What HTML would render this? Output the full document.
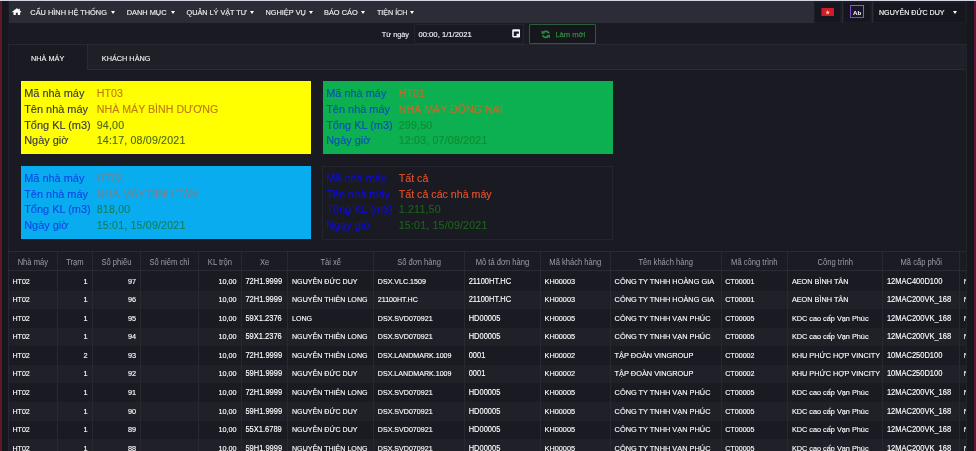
<!DOCTYPE html>
<html lang="vi">
<head>
<meta charset="utf-8">
<title>Nhà máy</title>
<style>
*{box-sizing:border-box;margin:0;padding:0}
html,body{width:976px;height:451px;overflow:hidden;background:#191a22;font-family:"Liberation Sans",sans-serif;color:#fff}
body{position:relative}
#wrap{position:absolute;left:0;top:0;width:976px;height:451px;will-change:transform;overflow:hidden}
.abs{position:absolute}
#topline{left:0;top:0;width:976px;height:1px;background:#d4d4e4}
#ledge{left:0;top:1px;width:1.5px;height:450px;background:#5e1a24}
#lgut{left:1.5px;top:1px;width:6.7px;height:450px;background:#15161e}
#redge{left:973.5px;top:1px;width:2.5px;height:450px;background:#621432}
#rgut{left:966.5px;top:1px;width:7px;height:450px;background:#15161e}
#nav{left:8.6px;top:1px;width:958px;height:22.3px;background:#2b2c36}
.nt{position:absolute;top:1.6px;-webkit-text-stroke:0.13px #f0f0f4;height:22px;line-height:22px;font-size:7.4px;color:#f0f0f4;white-space:nowrap}
.car{position:absolute;width:0;height:0;border-left:2.6px solid transparent;border-right:2.6px solid transparent;border-top:3.1px solid #fff;top:10.6px;margin-left:-0.2px}
.nbox{position:absolute;top:1px;height:22.3px;background:#1c1d26}
.nbox i{position:absolute;left:1.4px;right:1.4px;top:1.6px;bottom:1.6px;background:#16171e}
#panel{left:8px;top:44px;width:958.6px;height:407px;border-left:1px solid #22232c;border-right:1px solid #22232c}
#tabstrip{left:8px;top:44px;width:958.4px;height:26px;background:#1e1f27;border-top:1px solid #262832;border-bottom:1px solid #282a34}
#tabact{left:8px;top:44px;width:79.5px;height:26px;background:#191a22;border-top:1px solid #262832;border-right:1px solid #282a34;border-left:1px solid #23242e}
.tt{position:absolute;top:45.7px;-webkit-text-stroke:0.12px #f2f2f5;height:25px;line-height:25px;font-size:7.3px;color:#f2f2f5;white-space:nowrap}
.card{position:absolute;width:290px;height:73px;font-size:10.65px;line-height:15.7px;padding:4.9px 0 0 3.4px}
.card div{white-space:nowrap;height:15.7px}
.card span,.card b{-webkit-text-stroke:0.12px currentColor}
.card b{font-weight:normal;color:#0a0aee;display:inline-block;width:72.6px;font-size:10.95px}
.card .g{letter-spacing:0.17px}
.o{color:#f0522a}.g{color:#1a661a}
.cy b{color:#35364a}.cy .o{color:#c07a12}.cy .g{color:#4a6a12}
.cb b{color:#0a48e4}.cb .o{color:#7c8088}.cb .g{color:#10805a}
.cg b{color:#0a4ebc}.cg .o{color:#c46c2a}.cg .g{color:#108a30}
.cd b{color:#0c0ce6}.cd .o{color:#ea5028}.cd .g{color:#1c641c}

#grid{overflow:hidden;background:#191a22}
.gh{position:absolute;left:0;top:0;width:100%;background:#1a1b23}
.hc{position:absolute;top:2.4px;height:18.4px;line-height:18.4px;font-size:7.6px;color:#9c9ea8;text-align:center;white-space:nowrap;overflow:hidden}
.gr{position:absolute;left:0;width:100%;height:18.6px}
.gr.alt{background:#1f2028}
.c{position:absolute;top:0.6px;height:18.52px;line-height:18.52px;color:#fff;-webkit-text-stroke:0.12px #fff;white-space:nowrap;overflow:hidden;padding:0 4.6px 0 4.2px}
.c.r{text-align:right}
.c,.hc,.nt,.tt{transform:scaleY(1.09);transform-origin:50% 50%}
.vl{position:absolute;top:0;width:1px;height:100%;background:#272831}
.hl{position:absolute;left:0;height:1px;width:100%;background:#292a33}
</style>
</head>
<body>
<div id="wrap">
<div class="abs" id="topline"></div>
<div class="abs" id="ledge"></div><div class="abs" id="lgut"></div>
<div class="abs" id="rgut"></div><div class="abs" id="redge"></div>
<div class="abs" id="nav"></div>

<svg class="abs" style="left:12px;top:7.8px" width="9.6" height="7.3" preserveAspectRatio="none" viewBox="0 0 18 16"><path fill="#fff" d="M9 0.6 L0.3 8.2 L1.6 9.6 L2.8 8.6 V15.4 H7.2 V10.6 H10.8 V15.4 H15.2 V8.6 L16.4 9.6 L17.7 8.2 L14.6 5.4 V1.6 H12.4 V3.5 Z"/></svg>
<span class="nt" style="left:30.3px">CẤU HÌNH HỆ THỐNG</span><i class="car" style="left:110.9px"></i>
<span class="nt" style="left:126.7px">DANH MỤC</span><i class="car" style="left:171.1px"></i>
<span class="nt" style="left:186.6px;font-size:7.25px">QUẢN LÝ VẬT TƯ</span><i class="car" style="left:249.8px"></i>
<span class="nt" style="left:265.4px">NGHIỆP VỤ</span><i class="car" style="left:308.8px"></i>
<span class="nt" style="left:324px">BÁO CÁO</span><i class="car" style="left:361px"></i>
<span class="nt" style="left:376.9px;font-size:7.15px">TIỆN ÍCH</span><i class="car" style="left:410.5px"></i>
<div class="nbox" style="left:813.8px;width:28px"><i></i></div>
<div class="nbox" style="left:842.8px;width:28.8px"><i></i></div>
<div class="nbox" style="left:872.6px;width:94px"><i></i></div>
<svg class="abs" style="left:820.8px;top:8px" width="13.4" height="8.4" viewBox="0 0 30 20"><rect width="30" height="20" fill="#d4182e"/><path fill="#ffe070" d="M15 4.6 L16.5 8.7 H20.8 L17.3 11.3 L18.6 15.6 L15 13 L11.4 15.6 L12.7 11.3 L9.2 8.7 H13.5 Z"/></svg>
<div class="abs" style="left:850px;top:5.2px;width:14.2px;height:12.8px;border:1.2px solid #7a4cc0;border-top:1.7px solid #8c5cd4;border-right:1.7px solid #8c5cd4;background:#18152a"></div>
<span class="abs" style="left:850px;top:5.2px;width:14.2px;text-align:center;height:12.8px;line-height:15.4px;font-size:6.2px;font-weight:bold;color:#fff">Ab</span>
<span class="nt" style="left:879px;color:#fff;font-size:7.1px">NGUYỄN ĐỨC DUY</span><i class="car" style="left:953.2px;border-top-color:#fff"></i>


<span class="abs" style="left:381.8px;top:25.1px;height:20.5px;line-height:20.5px;font-size:7.3px;color:#e8e8ee;-webkit-text-stroke:0.15px #e8e8ee;white-space:nowrap">Từ ngày</span>
<div class="abs" style="left:413.8px;top:24.3px;width:110px;height:19.8px;background:#181922;border:1px solid #23242e"></div>
<span class="abs" style="left:418.4px;top:25.1px;height:20.5px;line-height:20.5px;font-size:7.7px;color:#f0f0f4;-webkit-text-stroke:0.15px #f0f0f4;white-space:nowrap">00:00, 1/1/2021</span>
<svg class="abs" style="left:512px;top:29.3px" width="8.4" height="8.7" viewBox="0 0 17 17.6" preserveAspectRatio="none"><path fill="#f6f6fa" fill-rule="evenodd" d="M2.6 0.6 H14.4 A2.2 2.2 0 0 1 16.6 2.8 V14.8 A2.2 2.2 0 0 1 14.4 17 H2.6 A2.2 2.2 0 0 1 0.4 14.8 V2.8 A2.2 2.2 0 0 1 2.6 0.6 Z M3.6 5 V14.2 H9.2 V9.8 H14 V5 Z"/></svg>
<div class="abs" style="left:529.3px;top:23.8px;width:66.6px;height:20.6px;border:1px solid #2d5c36;background:#15171d;border-radius:1px;z-index:3"></div>
<svg class="abs" style="left:540.7px;top:29.8px;z-index:4" width="9.6" height="8.8" viewBox="0 0 20 20" preserveAspectRatio="none"><g fill="none" stroke="#2b8a3a" stroke-width="4"><path d="M16.6 8 A6.8 6.8 0 0 0 5 5.4"/><path d="M3.4 12 A6.8 6.8 0 0 0 15 14.6"/></g><path fill="#2b8a3a" d="M0.8 1 L1.2 9.2 L9 7.8 Z M19.2 19 L18.8 10.8 L11 12.2 Z"/></svg>
<span class="abs" style="left:555.4px;top:24.1px;z-index:4;height:21px;line-height:21px;font-size:7.6px;color:#2b8a3a;-webkit-text-stroke:0.25px #2b8a3a;white-space:nowrap">Làm mới</span>

<div class="abs" id="panel"></div>
<div class="abs" id="tabstrip"></div><div class="abs" id="tabact"></div>
<i class="abs" style="left:88px;top:65px;width:878px;height:1px;background:#22232c"></i><i class="abs" style="left:961.5px;top:45px;width:1px;height:25px;background:#22232c"></i>
<span class="tt" style="left:31px">NHÀ MÁY</span>
<span class="tt" style="left:101.8px">KHÁCH HÀNG</span>
<div class="card cy" style="left:20.8px;top:81.4px;background:#ffff00;"><div><b>Mã nhà máy</b><span class="o">HT03</span></div><div><b>Tên nhà máy</b><span class="o">NHÀ MÁY BÌNH DƯƠNG</span></div><div><b>Tổng KL (m3)</b><span class="g">94,00</span></div><div><b>Ngày giờ</b><span class="g">14:17, 08/09/2021</span></div></div>
<div class="card cg" style="left:322.8px;top:81.4px;background:#0cb050;"><div><b>Mã nhà máy</b><span class="o">HT01</span></div><div><b>Tên nhà máy</b><span class="o">NHÀ MÁY ĐỒNG NAI</span></div><div><b>Tổng KL (m3)</b><span class="g">299,50</span></div><div><b>Ngày giờ</b><span class="g">12:03, 07/08/2021</span></div></div>
<div class="card cb" style="left:20.8px;top:166px;background:#0aacf0;"><div><b>Mã nhà máy</b><span class="o">HT02</span></div><div><b>Tên nhà máy</b><span class="o">NHÀ MÁY BÌNH TÂN</span></div><div><b>Tổng KL (m3)</b><span class="g">818,00</span></div><div><b>Ngày giờ</b><span class="g">15:01, 15/09/2021</span></div></div>
<div class="card cd" style="left:322.3px;top:166px;height:74px;width:291px;background:#191a22;border:1px solid #23252d;padding:3.9px 0 0 2.9px"><div><b>Mã nhà máy</b><span class="o">Tất cả</span></div><div><b>Tên nhà máy</b><span class="o">Tất cả các nhà máy</span></div><div><b>Tổng KL (m3)</b><span class="g">1.211,50</span></div><div><b>Ngày giờ</b><span class="g">15:01, 15/09/2021</span></div></div>

<!--GRIDSTART-->
<div id="grid" class="abs" style="left:7.75px;top:251.4px;width:958.5px;height:199.6px">
<div class="gh" style="height:20.6px">
<span class="hc" style="left:0.5px;width:49.2px">Nhà máy</span>
<span class="hc" style="left:49.8px;width:34.8px">Trạm</span>
<span class="hc" style="left:84.5px;width:48.3px">Số phiếu</span>
<span class="hc" style="left:132.8px;width:57.9px">Số niêm chì</span>
<span class="hc" style="left:190.8px;width:42.8px">KL trộn</span>
<span class="hc" style="left:233.5px;width:46.6px">Xe</span>
<span class="hc" style="left:280.1px;width:85.8px">Tài xế</span>
<span class="hc" style="left:365.9px;width:90.9px">Số đơn hàng</span>
<span class="hc" style="left:456.8px;width:75.8px">Mô tả đơn hàng</span>
<span class="hc" style="left:532.5px;width:70.1px">Mã khách hàng</span>
<span class="hc" style="left:602.6px;width:110.6px">Tên khách hàng</span>
<span class="hc" style="left:713.2px;width:66.7px">Mã công trình</span>
<span class="hc" style="left:780.0px;width:95.0px">Công trình</span>
<span class="hc" style="left:875.0px;width:76.9px">Mã cấp phối</span>
<span class="hc" style="left:951.9px;width:80.4px;">Ngày</span>
</div>
<div class="gr" style="top:20.60px">
<span class="c l" style="left:0.50px;width:49.25px;font-size:7.1px">HT02</span>
<span class="c r" style="left:49.75px;width:34.75px;font-size:7.3px">1</span>
<span class="c r" style="left:84.50px;width:48.35px;font-size:7.3px">97</span>
<span class="c r" style="left:190.75px;width:42.75px;font-size:7.3px">10,00</span>
<span class="c l" style="left:233.50px;width:46.55px;font-size:7.5px">72H1.9999</span>
<span class="c l" style="left:280.05px;width:85.80px;font-size:7.1px">NGUYỄN ĐỨC DUY</span>
<span class="c l" style="left:365.85px;width:90.90px;font-size:7.1px">DSX.VLC.1509</span>
<span class="c l" style="left:456.75px;width:75.80px;font-size:7.5px">21100HT.HC</span>
<span class="c l" style="left:532.55px;width:70.10px;font-size:7.35px">KH00003</span>
<span class="c l" style="left:602.65px;width:110.60px;font-size:7.38px">CÔNG TY TNHH HOÀNG GIA</span>
<span class="c l" style="left:713.25px;width:66.70px;font-size:7.15px">CT00001</span>
<span class="c l" style="left:779.95px;width:95.00px;font-size:7.3px">AEON BÌNH TÂN</span>
<span class="c l" style="left:874.95px;width:76.90px;font-size:7.5px">12MAC400D100</span>
<span class="c l" style="left:951.85px;width:80.40px;font-size:7.3px">N</span>
</div>
<div class="gr alt" style="top:39.16px">
<span class="c l" style="left:0.50px;width:49.25px;font-size:7.1px">HT02</span>
<span class="c r" style="left:49.75px;width:34.75px;font-size:7.3px">1</span>
<span class="c r" style="left:84.50px;width:48.35px;font-size:7.3px">96</span>
<span class="c r" style="left:190.75px;width:42.75px;font-size:7.3px">10,00</span>
<span class="c l" style="left:233.50px;width:46.55px;font-size:7.5px">72H1.9999</span>
<span class="c l" style="left:280.05px;width:85.80px;font-size:7.1px">NGUYỄN THIÊN LONG</span>
<span class="c l" style="left:365.85px;width:90.90px;font-size:7.1px">21100HT.HC</span>
<span class="c l" style="left:456.75px;width:75.80px;font-size:7.5px">21100HT.HC</span>
<span class="c l" style="left:532.55px;width:70.10px;font-size:7.35px">KH00003</span>
<span class="c l" style="left:602.65px;width:110.60px;font-size:7.38px">CÔNG TY TNHH HOÀNG GIA</span>
<span class="c l" style="left:713.25px;width:66.70px;font-size:7.15px">CT00001</span>
<span class="c l" style="left:779.95px;width:95.00px;font-size:7.3px">AEON BÌNH TÂN</span>
<span class="c l" style="left:874.95px;width:76.90px;font-size:7.5px">12MAC200VK_168</span>
<span class="c l" style="left:951.85px;width:80.40px;font-size:7.3px">N</span>
</div>
<div class="gr" style="top:57.72px">
<span class="c l" style="left:0.50px;width:49.25px;font-size:7.1px">HT02</span>
<span class="c r" style="left:49.75px;width:34.75px;font-size:7.3px">1</span>
<span class="c r" style="left:84.50px;width:48.35px;font-size:7.3px">95</span>
<span class="c r" style="left:190.75px;width:42.75px;font-size:7.3px">10,00</span>
<span class="c l" style="left:233.50px;width:46.55px;font-size:7.5px">59X1.2376</span>
<span class="c l" style="left:280.05px;width:85.80px;font-size:7.1px">LONG</span>
<span class="c l" style="left:365.85px;width:90.90px;font-size:7.1px">DSX.SVD070921</span>
<span class="c l" style="left:456.75px;width:75.80px;font-size:7.5px">HD00005</span>
<span class="c l" style="left:532.55px;width:70.10px;font-size:7.35px">KH00005</span>
<span class="c l" style="left:602.65px;width:110.60px;font-size:7.38px">CÔNG TY TNHH VẠN PHÚC</span>
<span class="c l" style="left:713.25px;width:66.70px;font-size:7.15px">CT00005</span>
<span class="c l" style="left:779.95px;width:95.00px;font-size:7.3px">KDC cao cấp Vạn Phúc</span>
<span class="c l" style="left:874.95px;width:76.90px;font-size:7.5px">12MAC200VK_168</span>
<span class="c l" style="left:951.85px;width:80.40px;font-size:7.3px">N</span>
</div>
<div class="gr alt" style="top:76.28px">
<span class="c l" style="left:0.50px;width:49.25px;font-size:7.1px">HT02</span>
<span class="c r" style="left:49.75px;width:34.75px;font-size:7.3px">1</span>
<span class="c r" style="left:84.50px;width:48.35px;font-size:7.3px">94</span>
<span class="c r" style="left:190.75px;width:42.75px;font-size:7.3px">10,00</span>
<span class="c l" style="left:233.50px;width:46.55px;font-size:7.5px">59X1.2376</span>
<span class="c l" style="left:280.05px;width:85.80px;font-size:7.1px">NGUYỄN THIÊN LONG</span>
<span class="c l" style="left:365.85px;width:90.90px;font-size:7.1px">DSX.SVD070921</span>
<span class="c l" style="left:456.75px;width:75.80px;font-size:7.5px">HD00005</span>
<span class="c l" style="left:532.55px;width:70.10px;font-size:7.35px">KH00005</span>
<span class="c l" style="left:602.65px;width:110.60px;font-size:7.38px">CÔNG TY TNHH VẠN PHÚC</span>
<span class="c l" style="left:713.25px;width:66.70px;font-size:7.15px">CT00005</span>
<span class="c l" style="left:779.95px;width:95.00px;font-size:7.3px">KDC cao cấp Vạn Phúc</span>
<span class="c l" style="left:874.95px;width:76.90px;font-size:7.5px">12MAC200VK_168</span>
<span class="c l" style="left:951.85px;width:80.40px;font-size:7.3px">N</span>
</div>
<div class="gr" style="top:94.84px">
<span class="c l" style="left:0.50px;width:49.25px;font-size:7.1px">HT02</span>
<span class="c r" style="left:49.75px;width:34.75px;font-size:7.3px">2</span>
<span class="c r" style="left:84.50px;width:48.35px;font-size:7.3px">93</span>
<span class="c r" style="left:190.75px;width:42.75px;font-size:7.3px">10,00</span>
<span class="c l" style="left:233.50px;width:46.55px;font-size:7.5px">72H1.9999</span>
<span class="c l" style="left:280.05px;width:85.80px;font-size:7.1px">NGUYỄN THIÊN LONG</span>
<span class="c l" style="left:365.85px;width:90.90px;font-size:7.1px">DSX.LANDMARK.1009</span>
<span class="c l" style="left:456.75px;width:75.80px;font-size:7.5px">0001</span>
<span class="c l" style="left:532.55px;width:70.10px;font-size:7.35px">KH00002</span>
<span class="c l" style="left:602.65px;width:110.60px;font-size:7.38px">TẬP ĐOÀN VINGROUP</span>
<span class="c l" style="left:713.25px;width:66.70px;font-size:7.15px">CT00002</span>
<span class="c l" style="left:779.95px;width:95.00px;font-size:7.3px">KHU PHỨC HỢP VINCITY</span>
<span class="c l" style="left:874.95px;width:76.90px;font-size:7.5px">10MAC250D100</span>
<span class="c l" style="left:951.85px;width:80.40px;font-size:7.3px">N</span>
</div>
<div class="gr alt" style="top:113.40px">
<span class="c l" style="left:0.50px;width:49.25px;font-size:7.1px">HT02</span>
<span class="c r" style="left:49.75px;width:34.75px;font-size:7.3px">1</span>
<span class="c r" style="left:84.50px;width:48.35px;font-size:7.3px">92</span>
<span class="c r" style="left:190.75px;width:42.75px;font-size:7.3px">10,00</span>
<span class="c l" style="left:233.50px;width:46.55px;font-size:7.5px">59H1.9999</span>
<span class="c l" style="left:280.05px;width:85.80px;font-size:7.1px">NGUYỄN ĐỨC DUY</span>
<span class="c l" style="left:365.85px;width:90.90px;font-size:7.1px">DSX.LANDMARK.1009</span>
<span class="c l" style="left:456.75px;width:75.80px;font-size:7.5px">0001</span>
<span class="c l" style="left:532.55px;width:70.10px;font-size:7.35px">KH00002</span>
<span class="c l" style="left:602.65px;width:110.60px;font-size:7.38px">TẬP ĐOÀN VINGROUP</span>
<span class="c l" style="left:713.25px;width:66.70px;font-size:7.15px">CT00002</span>
<span class="c l" style="left:779.95px;width:95.00px;font-size:7.3px">KHU PHỨC HỢP VINCITY</span>
<span class="c l" style="left:874.95px;width:76.90px;font-size:7.5px">10MAC250D100</span>
<span class="c l" style="left:951.85px;width:80.40px;font-size:7.3px">N</span>
</div>
<div class="gr" style="top:131.96px">
<span class="c l" style="left:0.50px;width:49.25px;font-size:7.1px">HT02</span>
<span class="c r" style="left:49.75px;width:34.75px;font-size:7.3px">1</span>
<span class="c r" style="left:84.50px;width:48.35px;font-size:7.3px">91</span>
<span class="c r" style="left:190.75px;width:42.75px;font-size:7.3px">10,00</span>
<span class="c l" style="left:233.50px;width:46.55px;font-size:7.5px">72H1.9999</span>
<span class="c l" style="left:280.05px;width:85.80px;font-size:7.1px">NGUYỄN THIÊN LONG</span>
<span class="c l" style="left:365.85px;width:90.90px;font-size:7.1px">DSX.SVD070921</span>
<span class="c l" style="left:456.75px;width:75.80px;font-size:7.5px">HD00005</span>
<span class="c l" style="left:532.55px;width:70.10px;font-size:7.35px">KH00005</span>
<span class="c l" style="left:602.65px;width:110.60px;font-size:7.38px">CÔNG TY TNHH VẠN PHÚC</span>
<span class="c l" style="left:713.25px;width:66.70px;font-size:7.15px">CT00005</span>
<span class="c l" style="left:779.95px;width:95.00px;font-size:7.3px">KDC cao cấp Vạn Phúc</span>
<span class="c l" style="left:874.95px;width:76.90px;font-size:7.5px">12MAC200VK_168</span>
<span class="c l" style="left:951.85px;width:80.40px;font-size:7.3px">N</span>
</div>
<div class="gr alt" style="top:150.52px">
<span class="c l" style="left:0.50px;width:49.25px;font-size:7.1px">HT02</span>
<span class="c r" style="left:49.75px;width:34.75px;font-size:7.3px">1</span>
<span class="c r" style="left:84.50px;width:48.35px;font-size:7.3px">90</span>
<span class="c r" style="left:190.75px;width:42.75px;font-size:7.3px">10,00</span>
<span class="c l" style="left:233.50px;width:46.55px;font-size:7.5px">59H1.9999</span>
<span class="c l" style="left:280.05px;width:85.80px;font-size:7.1px">NGUYỄN ĐỨC DUY</span>
<span class="c l" style="left:365.85px;width:90.90px;font-size:7.1px">DSX.SVD070921</span>
<span class="c l" style="left:456.75px;width:75.80px;font-size:7.5px">HD00005</span>
<span class="c l" style="left:532.55px;width:70.10px;font-size:7.35px">KH00005</span>
<span class="c l" style="left:602.65px;width:110.60px;font-size:7.38px">CÔNG TY TNHH VẠN PHÚC</span>
<span class="c l" style="left:713.25px;width:66.70px;font-size:7.15px">CT00005</span>
<span class="c l" style="left:779.95px;width:95.00px;font-size:7.3px">KDC cao cấp Vạn Phúc</span>
<span class="c l" style="left:874.95px;width:76.90px;font-size:7.5px">12MAC200VK_168</span>
<span class="c l" style="left:951.85px;width:80.40px;font-size:7.3px">N</span>
</div>
<div class="gr" style="top:169.08px">
<span class="c l" style="left:0.50px;width:49.25px;font-size:7.1px">HT02</span>
<span class="c r" style="left:49.75px;width:34.75px;font-size:7.3px">1</span>
<span class="c r" style="left:84.50px;width:48.35px;font-size:7.3px">89</span>
<span class="c r" style="left:190.75px;width:42.75px;font-size:7.3px">10,00</span>
<span class="c l" style="left:233.50px;width:46.55px;font-size:7.5px">55X1.6789</span>
<span class="c l" style="left:280.05px;width:85.80px;font-size:7.1px">NGUYỄN ĐỨC DUY</span>
<span class="c l" style="left:365.85px;width:90.90px;font-size:7.1px">DSX.SVD070921</span>
<span class="c l" style="left:456.75px;width:75.80px;font-size:7.5px">HD00005</span>
<span class="c l" style="left:532.55px;width:70.10px;font-size:7.35px">KH00005</span>
<span class="c l" style="left:602.65px;width:110.60px;font-size:7.38px">CÔNG TY TNHH VẠN PHÚC</span>
<span class="c l" style="left:713.25px;width:66.70px;font-size:7.15px">CT00005</span>
<span class="c l" style="left:779.95px;width:95.00px;font-size:7.3px">KDC cao cấp Vạn Phúc</span>
<span class="c l" style="left:874.95px;width:76.90px;font-size:7.5px">12MAC200VK_168</span>
<span class="c l" style="left:951.85px;width:80.40px;font-size:7.3px">N</span>
</div>
<div class="gr alt" style="top:187.64px">
<span class="c l" style="left:0.50px;width:49.25px;font-size:7.1px">HT02</span>
<span class="c r" style="left:49.75px;width:34.75px;font-size:7.3px">1</span>
<span class="c r" style="left:84.50px;width:48.35px;font-size:7.3px">88</span>
<span class="c r" style="left:190.75px;width:42.75px;font-size:7.3px">10,00</span>
<span class="c l" style="left:233.50px;width:46.55px;font-size:7.5px">59H1.9999</span>
<span class="c l" style="left:280.05px;width:85.80px;font-size:7.1px">NGUYỄN THIÊN LONG</span>
<span class="c l" style="left:365.85px;width:90.90px;font-size:7.1px">DSX.SVD070921</span>
<span class="c l" style="left:456.75px;width:75.80px;font-size:7.5px">HD00005</span>
<span class="c l" style="left:532.55px;width:70.10px;font-size:7.35px">KH00005</span>
<span class="c l" style="left:602.65px;width:110.60px;font-size:7.38px">CÔNG TY TNHH VẠN PHÚC</span>
<span class="c l" style="left:713.25px;width:66.70px;font-size:7.15px">CT00005</span>
<span class="c l" style="left:779.95px;width:95.00px;font-size:7.3px">KDC cao cấp Vạn Phúc</span>
<span class="c l" style="left:874.95px;width:76.90px;font-size:7.5px">12MAC200VK_168</span>
<span class="c l" style="left:951.85px;width:80.40px;font-size:7.3px">N</span>
</div>
<i class="vl" style="left:49.25px"></i>
<i class="vl" style="left:84.00px"></i>
<i class="vl" style="left:132.35px"></i>
<i class="vl" style="left:190.25px"></i>
<i class="vl" style="left:233.00px"></i>
<i class="vl" style="left:279.55px"></i>
<i class="vl" style="left:365.35px"></i>
<i class="vl" style="left:456.25px"></i>
<i class="vl" style="left:532.05px"></i>
<i class="vl" style="left:602.15px"></i>
<i class="vl" style="left:712.75px"></i>
<i class="vl" style="left:779.45px"></i>
<i class="vl" style="left:874.45px"></i>
<i class="vl" style="left:951.35px"></i>
<i class="vl" style="left:0px"></i><i class="hl" style="top:0px"></i><i class="hl" style="top:18.3px"></i>
</div>
<!--GRIDEND-->
</div>
</body>
</html>
